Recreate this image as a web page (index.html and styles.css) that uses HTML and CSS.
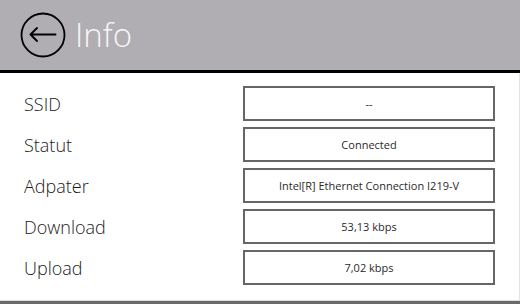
FILE: index.html
```html
<!DOCTYPE html>
<html lang="fr">

<head>
  <meta charset="UTF-8">
  <meta name="viewport" content="width=device-width, initial-scale=1.0">
  <title>Info</title>
  <link rel="stylesheet" href="styles.css">
</head>

<body>
  <div class="window">
    <header class="title-bar">
      <button class="back" aria-label="Retour">
        <svg width="48" height="48" viewBox="0 0 48 48">
          <circle cx="24" cy="24" r="21.5" fill="none" stroke="#000" stroke-width="1.8" />
          <path d="M11.5 23.5 H36.5 M11.5 23.5 L18 17 M11.5 23.5 L18 30" fill="none" stroke="#000"
            stroke-width="1.9" stroke-linecap="round" />
        </svg>
      </button>
      <h1 class="title">Info</h1>
    </header>

    <main class="details">
      <div class="row">
        <span class="label">SSID</span>
        <span class="value">--</span>
      </div>
      <div class="row">
        <span class="label">Statut</span>
        <span class="value">Connected</span>
      </div>
      <div class="row">
        <span class="label">Adpater</span>
        <span class="value">Intel[R] Ethernet Connection I219-V</span>
      </div>
      <div class="row">
        <span class="label">Download</span>
        <span class="value">53,13 kbps</span>
      </div>
      <div class="row">
        <span class="label">Upload</span>
        <span class="value">7,02 kbps</span>
      </div>
    </main>
  </div>
</body>

</html>
```

FILE: styles.css
```css
body {
  margin: 0;
  padding: 0;
  font-family: 'Open Sans', 'Noto Sans', sans-serif;
  background-color: #ffffff;
  color: #111;
}

.window {
  width: 520px;
  height: 304px;
  display: flex;
  flex-direction: column;
  box-sizing: border-box;
  border-bottom: 3px solid #6a6a6a;
}

.title-bar {
  height: 70px;
  flex-shrink: 0;
  display: flex;
  align-items: center;
  gap: 8px;
  padding-left: 19px;
  background-color: #b1aeb3;
  border-bottom: 3px solid #000;
}

.back {
  border: none;
  background: none;
  padding: 0;
  width: 48px;
  height: 48px;
  cursor: pointer;
}

.back svg {
  display: block;
}

.title {
  margin: 0;
  font-size: 33px;
  font-weight: 300;
  color: #f6f6f6;
  line-height: 1;
  padding-bottom: 1px;
}

.details {
  flex: 1;
  display: flex;
  flex-direction: column;
  gap: 6px;
  padding: 13px 24px 0 24px;
  border-right: 1px solid #e4e4e4;
  border-bottom: 1px solid #dcdcdc;
}

.row {
  display: flex;
  align-items: center;
  justify-content: space-between;
  height: 35px;
}

.label {
  font-size: 18px;
  font-weight: 300;
  color: #1a1a1a;
}

.value {
  width: 252px;
  height: 35px;
  box-sizing: border-box;
  display: flex;
  align-items: center;
  justify-content: center;
  border: 2px solid #666;
  font-size: 11px;
  color: #2a2a2a;
}
```
